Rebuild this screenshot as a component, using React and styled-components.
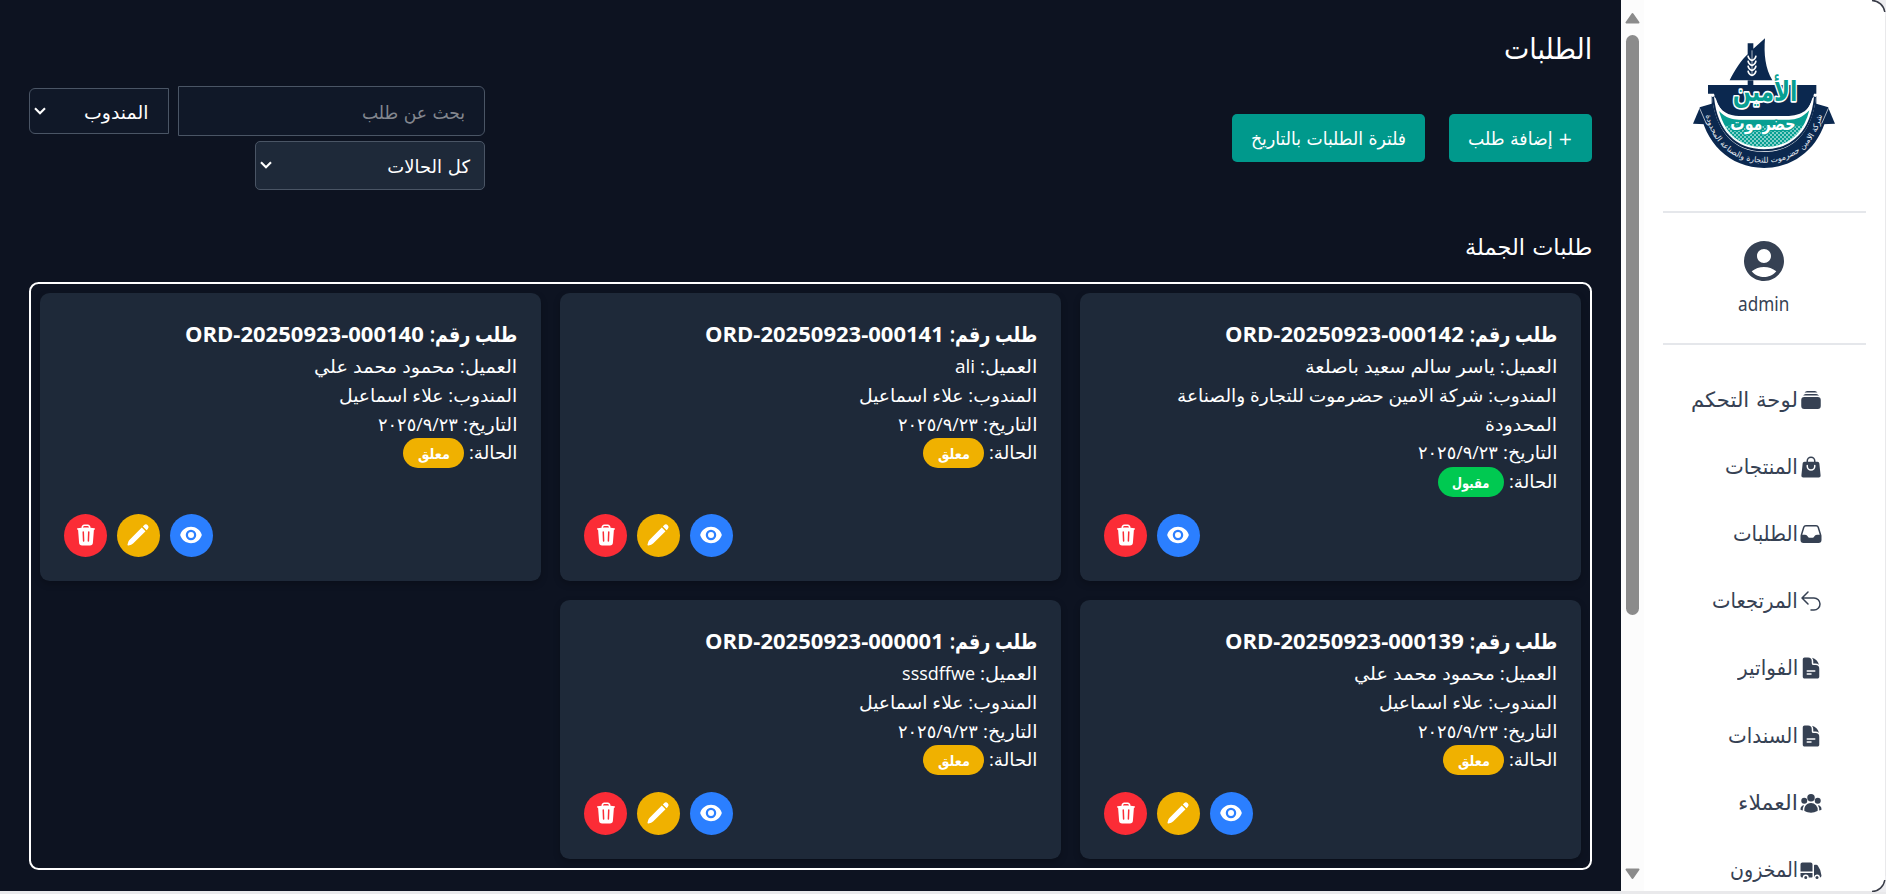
import React, { useLayoutEffect, useRef, useState } from 'react';
import styled, { createGlobalStyle } from 'styled-components';
import {
  HiRectangleStack,
  HiShoppingBag,
  HiInbox,
  HiArrowUturnLeft,
  HiDocumentText,
  HiUserGroup,
  HiTruck,
  HiTrash,
  HiPencil,
  HiEye,
} from 'react-icons/hi2';
import { MdAccountCircle } from 'react-icons/md';

const GlobalStyle = createGlobalStyle`
  *, *::before, *::after { box-sizing: border-box; }
  html { font-size: 19.2px; }
  body {
    margin: 0;
    overflow: hidden;
    font-family: "Open Sans", "DejaVu Sans", sans-serif;
    background: #ededf0;
  }
  h1, h2, h3, p { margin: 0; font-weight: 400; }
`;

/* ---------- text with a set measure ---------- */

const Measure = styled.span`
  display: inline-block;
  width: ${(p) => p.$w}px;
  white-space: nowrap;
`;

const Ink = styled.span`
  display: inline-block;
  transform-origin: right center;
  direction: ${(p) => (p.$ltr ? 'ltr' : 'rtl')};
`;

function Fit({ w, ltr, children }) {
  const ref = useRef(null);
  const [scale, setScale] = useState(1);
  useLayoutEffect(() => {
    const natural = ref.current.offsetWidth;
    if (natural) setScale(w / natural);
  }, [w, children]);
  return (
    <Measure $w={w}>
      <Ink ref={ref} $ltr={ltr} style={{ transform: `scaleX(${scale})` }}>
        {children}
      </Ink>
    </Measure>
  );
}

/* ---------- frame ---------- */

const Screen = styled.div`
  direction: ltr;
  display: flex;
  width: 1886px;
  height: 894px;
  padding: 0 1px 3px 0;
  background: #e9e9eb;
  position: relative;
`;

const Main = styled.main`
  direction: rtl;
  width: 1621px;
  padding: 28px 29px;
  background: #0d1321;
  color: #fff;
  overflow: hidden;
`;

const Track = styled.div`
  width: 23px;
  display: flex;
  flex-direction: column;
  align-items: center;
  padding: 12px 0 11px;
  background: #fcfcfc;
`;

const Thumb = styled.div`
  width: 13px;
  height: 580px;
  margin: 11px 0 auto;
  border-radius: 7px;
  background: #8b8b8b;
`;

const Sidebar = styled.aside`
  direction: rtl;
  flex: 1;
  display: flex;
  flex-direction: column;
  padding: 25px 19px 0;
  background: #fff;
  color: #364153;
  overflow: hidden;
  > * { flex-shrink: 0; }
`;

const Corner = styled.svg`
  position: absolute;
  right: 0;
  ${(p) => (p.$bottom ? 'bottom: 2px; transform: scaleY(-1);' : 'top: 0;')}
`;

/* ---------- sidebar ---------- */

const LogoBox = styled.div`
  height: 186px;
  display: flex;
  justify-content: center;
  padding-right: 1px;
`;

const Rule = styled.div`
  height: 2px;
  background: #e5e7eb;
`;

const Profile = styled.div`
  height: 130px;
  display: flex;
  flex-direction: column;
  align-items: center;
  padding: 24px 1px 0 0;
  font-family: "Noto Sans", sans-serif;
  font-size: 19.2px;
  line-height: 28.8px;
  svg { margin-bottom: 5px; flex: none; }
`;

const Nav = styled.nav`
  padding: 21px 43px 0 0;
`;

const NavItem = styled.a`
  height: 67.2px;
  display: flex;
  align-items: center;
  gap: 1px;
  font-family: "DejaVu Sans", sans-serif;
  font-size: 21px;
  svg { flex: none; }
`;

/* ---------- header ---------- */

const Title = styled.h1`
  height: 58px;
  font-family: "DejaVu Sans", sans-serif;
  font-size: 29px;
  line-height: 42px;
`;

const Toolbar = styled.div`
  height: 130px;
  display: flex;
  justify-content: space-between;
`;

const Actions = styled.div`
  display: flex;
  gap: 24px;
  padding-top: 28px;
`;

const Button = styled.button`
  width: ${(p) => p.$w}px;
  height: 48px;
  padding: 0;
  border: 0;
  border-radius: 5px;
  background: #00998c;
  color: #fff;
  font-family: "DejaVu Sans", sans-serif;
  font-size: 18px;
  line-height: 50px;
`;

const Filters = styled.div`
  width: 456px;
  display: flex;
  flex-direction: column;
  gap: 5px;
`;

const FilterRow = styled.div`
  display: flex;
  align-items: center;
  justify-content: space-between;
`;

const Field = styled.div`
  width: ${(p) => p.$w}px;
  height: ${(p) => p.$h}px;
  display: flex;
  align-items: center;
  justify-content: space-between;
  padding: 3px ${(p) => p.$pad}px 0 4px;
  border: 1px solid #4a5565;
  border-radius: ${(p) => p.$radius};
  background: ${(p) => (p.$raised ? '#1e2939' : '#101828')};
  color: ${(p) => (p.$muted ? '#83878f' : '#fff')};
  font-family: "DejaVu Sans", sans-serif;
  font-size: 18px;
  line-height: 28px;
  svg { margin-bottom: 4px; }
`;

const Section = styled.h2`
  height: 66px;
  padding-top: 14px;
  font-family: "DejaVu Sans", sans-serif;
  font-size: 23px;
  line-height: 34px;
`;

/* ---------- order cards ---------- */

const Board = styled.section`
  display: grid;
  grid-template-columns: repeat(3, 1fr);
  grid-template-rows: 288px 259px;
  gap: 19px;
  padding: 9px;
  border: 2px solid #fff;
  border-radius: 9.6px;
`;

const Card = styled.article`
  display: flex;
  flex-direction: column;
  justify-content: space-between;
  padding: 24px;
  border-radius: 9.6px;
  background: #1e2939;
  box-shadow: 0 3px 7px rgba(0, 0, 0, 0.22);
`;

const CardTitle = styled.h3`
  height: 35px;
  display: flex;
  gap: 6px;
  font-size: 21px;
  line-height: 34px;
  font-weight: 700;
`;

const Line = styled.p`
  height: 28.8px;
  display: flex;
  align-items: center;
  gap: 5px;
  font-size: 18px;
  line-height: 28.8px;
`;

const Badge = styled.span`
  width: ${(p) => p.$w}px;
  height: 30px;
  display: flex;
  justify-content: center;
  margin-top: 1px;
  border-radius: 15px;
  background: ${(p) => p.$bg};
  font-size: 14px;
  font-weight: 700;
  line-height: 32px;
`;

const CardActions = styled.div`
  display: flex;
  justify-content: flex-end;
  gap: 9.6px;
`;

const RoundButton = styled.button`
  width: 43.2px;
  height: 43.2px;
  display: grid;
  place-items: center;
  padding: 0;
  border: 0;
  border-radius: 50%;
  background: ${(p) => p.$bg};
  color: #fff;
`;

/* ---------- drawings ---------- */

const Chevron = () => (
  <svg width="12" height="8" viewBox="0 0 12 8">
    <path d="M1 1.2 6 6.2 11 1.2" fill="none" stroke="#fff" strokeWidth="2.1" />
  </svg>
);

const Arrow = ({ down }) => (
  <svg width="15" height="12" viewBox="0 0 15 12">
    <path
      d={down ? 'M1.5 1.5h12L7.5 10z' : 'M1.5 10.5h12L7.5 2z'}
      fill="#8b8b8b"
      stroke="#8b8b8b"
      strokeWidth="2"
      strokeLinejoin="round"
    />
  </svg>
);

const CornerArt = ({ bottom }) => (
  <Corner $bottom={bottom} width="16" height="16" viewBox="0 0 16 16">
    <path d="M0 0H16V16H15A14 15 0 0 0 0 0Z" fill="#ededf0" />
    <path d="M2 .4A13.5 13.5 0 0 1 14.8 12" fill="none" stroke="#3a3d48" strokeWidth="1.5" />
  </Corner>
);

const Logo = () => (
  <svg width="170" height="155" viewBox="0 0 510 465">
    <defs>
      <pattern id="net" width="12" height="12" patternUnits="userSpaceOnUse">
        <path d="M0 6 6 0 12 6 6 12Z" fill="none" stroke="#d4f1ee" strokeWidth="1.8" />
      </pattern>
      <path id="ribbon" d="M78 256C92 352 162 413 255 413S418 352 432 256" />
    </defs>
    <g fill="#0b284f">
      <path d="M258 40 223 71V55H206V88C188 104 168 134 152 166H280C259 130 254 88 258 40Z" />
      <path d="M206 166h17v18h-17z" />
      <path d="M87 180H412V206H405C394 250 366 300 255 300S116 250 105 206H87Z" />
      <path d="M62 249 100 238 118 290 80 298 42 296Z" />
      <path d="M448 249 410 238 392 290 430 298 468 296Z" />
      <path d="M62 247 98 236V214H107C120 310 170 378 255 378S390 310 403 214H412V236L448 247C436 352 358 429 255 429S74 352 62 247Z" />
    </g>
    <path d="M99 213C103 214 108 216 111 222C122 262 150 272 180 273H330C360 270 390 262 399 222C402 216 407 214 411 213C402 312 350 381 255 381S108 312 99 213Z" fill="#fff" />
    <path d="M102 216C112 315 165 376 255 376S398 315 408 216" fill="none" stroke="#0b284f" strokeWidth="6" />
    <path d="M120 258C142 280 160 284 180 284H330C352 284 370 278 391 256C372 330 326 366 255 366S140 330 120 258Z" fill="#079f92" />
    <path d="M132 302H378C356 346 314 366 255 366S154 346 132 302Z" fill="url(#net)" />
    <path d="M62 250 82 296M448 250 428 296" stroke="#fff" strokeWidth="2" />
    <g fill="none" stroke="#fff" strokeWidth="5">
      <path d="M219 76V150" strokeWidth="2" />
      <path d="M207 92q2 12 12 14q10-2 12-14M207 107q2 12 12 14q10-2 12-14M207 122q2 12 12 14q10-2 12-14M207 137q2 12 12 14q10-2 12-14" />
    </g>
    <g fontFamily="DejaVu Sans" fontWeight="700" textAnchor="middle" strokeLinejoin="round" paintOrder="stroke">
      <text x="258" y="228" fontSize="84" textLength="194" lengthAdjust="spacingAndGlyphs" fill="#079f92" stroke="#fff" strokeWidth="10">الأمين</text>
      <text x="252" y="314" fontSize="54" textLength="196" lengthAdjust="spacingAndGlyphs" fill="#fff" stroke="#079f92" strokeWidth="8">حضرموت</text>
    </g>
    <text fontFamily="DejaVu Sans" fontSize="23.5" fill="#e8edf4" textAnchor="middle">
      <textPath href="#ribbon" startOffset="50%">شركة الامين حضرموت للتجارة والصناعة المحدودة</textPath>
    </text>
  </svg>
);

/* ---------- data ---------- */

const NAV = [
  { label: 'لوحة التحكم', w: 107, Icon: HiRectangleStack },
  { label: 'المنتجات', w: 73, Icon: HiShoppingBag },
  { label: 'الطلبات', w: 65, Icon: HiInbox },
  { label: 'المرتجعات', w: 86, Icon: HiArrowUturnLeft },
  { label: 'الفواتير', w: 60, Icon: HiDocumentText },
  { label: 'السندات', w: 70, Icon: HiDocumentText },
  { label: 'العملاء', w: 60, Icon: HiUserGroup },
  { label: 'المخزون', w: 68, Icon: HiTruck },
];

const MAHMOUD = [['العميل: محمود محمد علي', 203]];
const ALAA = [['المندوب: علاء اسماعيل', 178]];

const ORDERS = [
  {
    id: 'ORD-20250923-000142',
    lines: [
      [['العميل: ياسر سالم سعيد باصلعة', 252]],
      [['المندوب: شركة الامين حضرموت للتجارة والصناعة', 380]],
      [['المحدودة', 72]],
    ],
    accepted: true,
  },
  { id: 'ORD-20250923-000141', lines: [[['العميل:', 57], ['ali', 20, true]], ALAA] },
  { id: 'ORD-20250923-000140', lines: [MAHMOUD, ALAA] },
  { id: 'ORD-20250923-000139', lines: [MAHMOUD, ALAA] },
  { id: 'ORD-20250923-000001', lines: [[['العميل:', 57], ['sssdffwe', 73, true]], ALAA] },
];

function OrderCard({ order }) {
  return (
    <Card>
      <div>
        <CardTitle>
          <Fit w={87}>طلب رقم:</Fit>
          <Fit w={239} ltr>{order.id}</Fit>
        </CardTitle>
        {order.lines.map((parts, i) => (
          <Line key={i}>
            {parts.map(([text, w, ltr]) => (
              <Fit key={text} w={w} ltr={ltr}>{text}</Fit>
            ))}
          </Line>
        ))}
        <Line>
          <Fit w={54}>التاريخ:</Fit>
          <Fit w={80}>٢٠٢٥/٩/٢٣</Fit>
        </Line>
        <Line>
          <Fit w={48}>الحالة:</Fit>
          <Badge $w={order.accepted ? 66 : 61} $bg={order.accepted ? '#00c951' : '#f0b100'}>
            {order.accepted ? <Fit w={37}>مقبول</Fit> : <Fit w={32}>معلق</Fit>}
          </Badge>
        </Line>
      </div>
      <CardActions>
        <RoundButton $bg="#2b7fff"><HiEye size={24} /></RoundButton>
        {!order.accepted && <RoundButton $bg="#f0b100"><HiPencil size={24} /></RoundButton>}
        <RoundButton $bg="#fb2c36"><HiTrash size={24} /></RoundButton>
      </CardActions>
    </Card>
  );
}

export default function App() {
  return (
    <Screen>
      <GlobalStyle />
      <Main>
        <Title><Fit w={88}>الطلبات</Fit></Title>
        <Toolbar>
          <Actions>
            <Button $w={143}><Fit w={105}>+ إضافة طلب</Fit></Button>
            <Button $w={193}><Fit w={155}>فلترة الطلبات بالتاريخ</Fit></Button>
          </Actions>
          <Filters>
            <FilterRow>
              <Field $w={307} $h={50} $pad={19} $radius="0 6px 6px 0" $muted>
                <Fit w={103}>بحث عن طلب</Fit>
              </Field>
              <Field $w={140} $h={46} $pad={20} $radius="6px 0 0 6px">
                <Fit w={64}>المندوب</Fit>
                <Chevron />
              </Field>
            </FilterRow>
            <Field $w={230} $h={49} $pad={14} $radius="5px" $raised>
              <Fit w={83}>كل الحالات</Fit>
              <Chevron />
            </Field>
          </Filters>
        </Toolbar>
        <Section><Fit w={127}>طلبات الجملة</Fit></Section>
        <Board>
          {ORDERS.map((order) => <OrderCard key={order.id} order={order} />)}
        </Board>
      </Main>
      <Track>
        <Arrow />
        <Thumb />
        <Arrow down />
      </Track>
      <Sidebar>
        <LogoBox><Logo /></LogoBox>
        <Rule />
        <Profile>
          <MdAccountCircle size={48} />
          <Fit w={51} ltr>admin</Fit>
        </Profile>
        <Rule />
        <Nav>
          {NAV.map(({ label, w, Icon }) => (
            <NavItem key={label}>
              <Icon size={24} />
              <Fit w={w}>{label}</Fit>
            </NavItem>
          ))}
        </Nav>
      </Sidebar>
      <CornerArt />
      <CornerArt bottom />
    </Screen>
  );
}
